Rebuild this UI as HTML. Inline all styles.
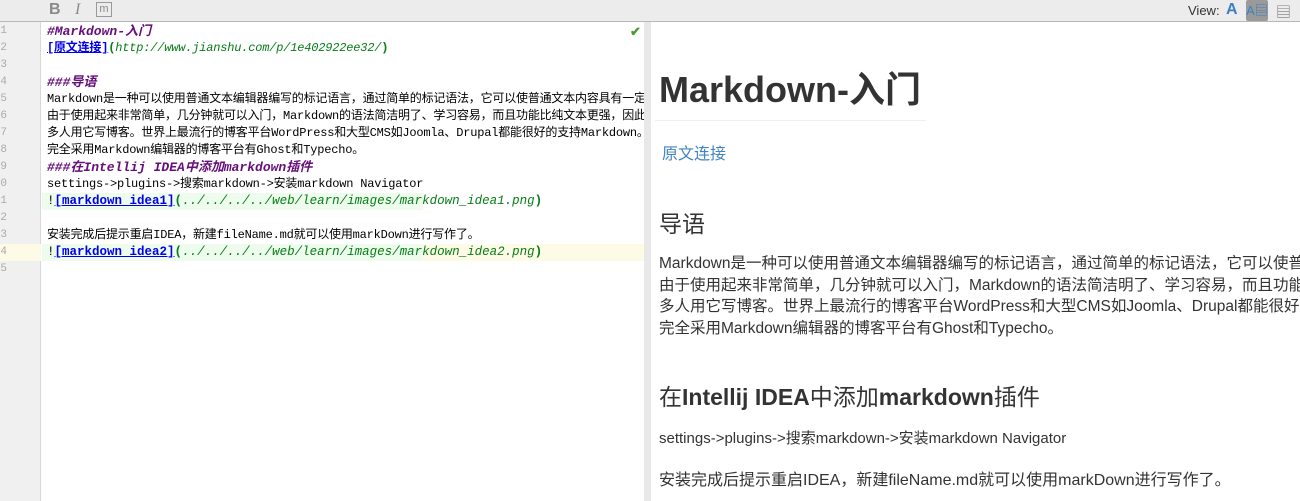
<!DOCTYPE html>
<html><head><meta charset="utf-8"><style>
*{margin:0;padding:0;box-sizing:border-box}
body{width:1300px;height:501px;overflow:hidden;background:#fff;font-family:"Liberation Sans","Noto Sans CJK SC",sans-serif;position:relative}
.tb{position:absolute;left:0;top:0;width:1300px;height:22px;background:#ececec;border-bottom:1px solid #b8b8b8}
.tb span{position:absolute;top:1px;font-size:16px;color:#8a8a8a}
.gut{position:absolute;left:0;top:22px;width:41px;height:479px;background:#f0f0f0;border-right:1px solid #d8d8d8}
.ed{position:absolute;left:42px;top:22px;width:602px;height:479px;overflow:hidden}
.ln{position:absolute;left:0;height:17px;font:11px "Liberation Mono",monospace;color:#aaa;width:7px;overflow:hidden;direction:rtl}
.l{position:absolute;left:5px;height:17px;line-height:17px;font-family:"Liberation Mono","Noto Sans CJK SC",monospace;font-size:12px;letter-spacing:-0.2px;white-space:nowrap;color:#000}
.h{color:#660e7a;font-weight:bold;font-style:italic;font-size:13px;letter-spacing:0}
.lk{color:#00e;font-weight:bold;text-decoration:underline}
.u{color:#067d17;font-style:italic}
.p{color:#067d17;font-weight:bold}
.img{font-size:12.5px;letter-spacing:0}
.split{position:absolute;left:644px;top:22px;width:7px;height:479px;background:#e8e8e8}
.pv{position:absolute;left:651px;top:22px;width:649px;height:479px;color:#333;overflow:hidden}
.pv div{position:absolute;left:8px;white-space:nowrap}
</style></head><body>
<div class="tb">
<span style="left:49px;font-weight:bold">B</span>
<span style="left:75px;font-style:italic;font-family:'Liberation Serif',serif">I</span>
<span style="left:96px;top:2px;width:16px;height:15px;border:1px solid #999;font-size:11px;line-height:13px;text-align:center">m</span>
<span style="left:1188px;top:3px;font-size:13px;color:#333">View:</span>
<span style="left:1226px;color:#3d7fc1;font-weight:bold">A</span>
<span style="left:1246px;top:0;width:22px;height:21px;background:#9a9a9a;border-radius:2px;font-size:13px;color:#3d7fc1;line-height:21px;text-align:center">A▤</span>
<span style="left:1276px;font-size:15px;color:#777">▤</span>
</div>
<div class="gut">
<div style="position:absolute;left:0;top:222px;width:41px;height:17px;background:#fdfbe5"></div>
<div class="ln" style="top:3px">1</div><div class="ln" style="top:20px">2</div><div class="ln" style="top:37px">3</div><div class="ln" style="top:54px">4</div><div class="ln" style="top:71px">5</div><div class="ln" style="top:88px">6</div><div class="ln" style="top:105px">7</div><div class="ln" style="top:122px">8</div><div class="ln" style="top:139px">9</div><div class="ln" style="top:156px">0</div><div class="ln" style="top:173px">1</div><div class="ln" style="top:190px">2</div><div class="ln" style="top:207px">3</div><div class="ln" style="top:224px">4</div><div class="ln" style="top:241px">5</div>
</div>
<div class="ed">
<div style="position:absolute;left:0;top:222px;width:602px;height:17px;background:#fdfbe5"></div>
<div style="position:absolute;left:0;top:171px;width:381px;height:17px;background:#edfcec"></div>
<div style="position:absolute;left:0;top:222px;width:381px;height:17px;background:#edfcec"></div>
<span style="position:absolute;left:588px;top:2px;color:#4a9a3a;font-size:13px;font-weight:bold">✔</span>
<div class="l" style="top:1px"><span class="h">#Markdown-入门</span></div>
<div class="l" style="top:18px"><span class="lk">[原文连接]</span><span class="p">(</span><span class="u">http://www.jianshu.com/p/1e402922ee32/</span><span class="p">)</span></div>
<div class="l" style="top:52px"><span class="h">###导语</span></div>
<div class="l" style="top:69px">Markdown是一种可以使用普通文本编辑器编写的标记语言，通过简单的标记语法，它可以使普通文本内容具有一定的格式。</div>
<div class="l" style="top:86px">由于使用起来非常简单，几分钟就可以入门，Markdown的语法简洁明了、学习容易，而且功能比纯文本更强，因此有很</div>
<div class="l" style="top:103px">多人用它写博客。世界上最流行的博客平台WordPress和大型CMS如Joomla、Drupal都能很好的支持Markdown。</div>
<div class="l" style="top:120px">完全采用Markdown编辑器的博客平台有Ghost和Typecho。</div>
<div class="l" style="top:137px"><span class="h">###在Intellij IDEA中添加markdown插件</span></div>
<div class="l" style="top:154px">settings-&gt;plugins-&gt;搜索markdown-&gt;安装markdown Navigator</div>
<div class="l img" style="top:171px">!<span class="lk">[markdown_idea1]</span><span class="p">(</span><span class="u">../../../../web/learn/images/markdown_idea1.png</span><span class="p">)</span></div>
<div class="l" style="top:205px">安装完成后提示重启IDEA，新建fileName.md就可以使用markDown进行写作了。</div>
<div class="l img" style="top:222px">!<span class="lk">[markdown_idea2]</span><span class="p">(</span><span class="u">../../../../web/learn/images/markdown_idea2.png</span><span class="p">)</span></div>
</div>
<div class="split"></div>
<div class="pv">
<div style="top:46px;font-size:36px;font-weight:bold;line-height:44px">Markdown-入门</div>
<div style="top:98px;left:4px;width:271px;height:1px;background:#eee"></div>
<div style="top:118px;left:11px;font-size:16px;color:#4183c4">原文连接</div>
<div style="top:183px;font-size:23px">导语</div>
<div style="top:231px;font-size:15.5px;line-height:21.5px">Markdown是一种可以使用普通文本编辑器编写的标记语言，通过简单的标记语法，它可以使普通文本内容具有一定的格式。<br>由于使用起来非常简单，几分钟就可以入门，Markdown的语法简洁明了、学习容易，而且功能比纯文本更强，因此有很<br>多人用它写博客。世界上最流行的博客平台WordPress和大型CMS如Joomla、Drupal都能很好的支持Markdown。<br>完全采用Markdown编辑器的博客平台有Ghost和Typecho。</div>
<div style="top:356px;font-size:23px">在<b>Intellij IDEA</b>中添加<b>markdown</b>插件</div>
<div style="top:405px;font-size:15px">settings-&gt;plugins-&gt;搜索markdown-&gt;安装markdown Navigator</div>
<div style="top:444px;font-size:16px">安装完成后提示重启IDEA，新建fileName.md就可以使用markDown进行写作了。</div>
</div>
</body></html>
